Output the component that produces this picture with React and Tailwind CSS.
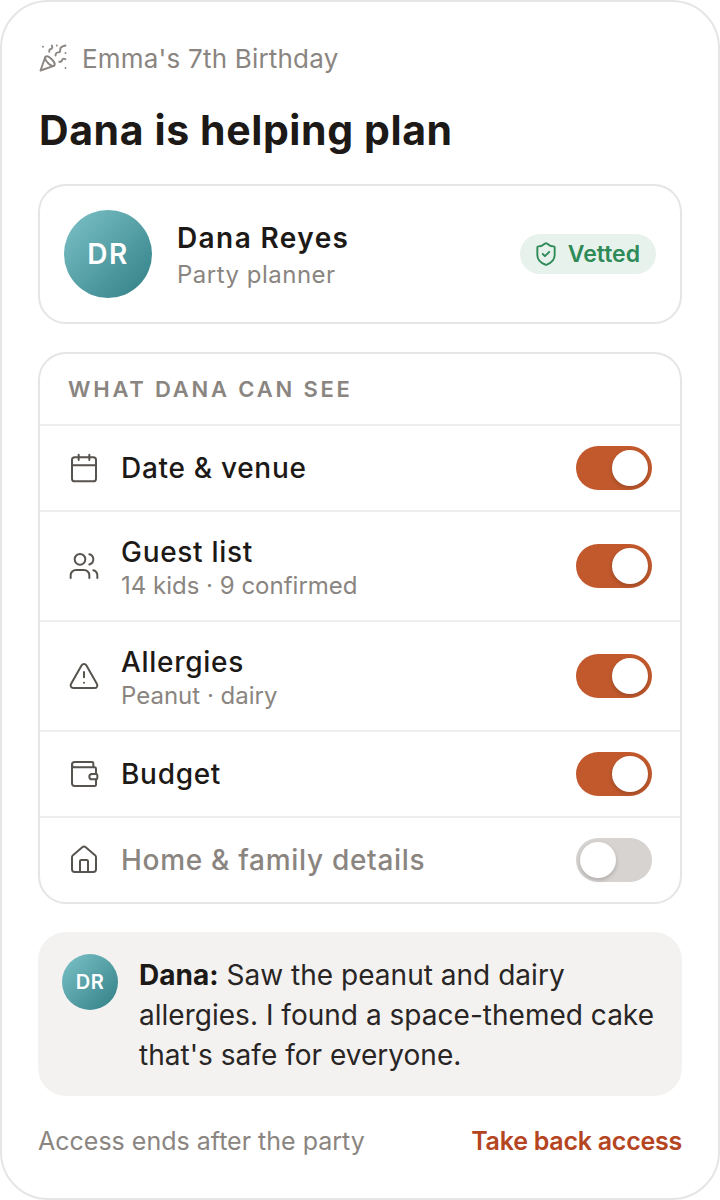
import React from 'react';
import { PartyPopper, Calendar, Users, TriangleAlert, Wallet, House, ShieldCheck } from 'lucide-react';

const Avatar = ({ big }) => (
  <div
    className={`flex shrink-0 items-center justify-center rounded-full bg-gradient-to-br from-[#7cc3c8] to-[#2f7f86] font-semibold text-white ${
      big ? 'h-[88px] w-[88px] text-[28px] tracking-[1.5px]' : 'h-14 w-14 text-[20px] tracking-[0.5px]'
    }`}
  >
    DR
  </div>
);

const Toggle = ({ on }) => (
  <div
    className={`flex h-11 w-[76px] shrink-0 items-center rounded-full p-1 ${
      on ? 'justify-end bg-[#c2592d]' : 'justify-start bg-[#d6d3d1]'
    }`}
  >
    <div className="h-9 w-9 rounded-full bg-white shadow-[0_2px_4px_rgba(0,0,0,0.2)]" />
  </div>
);

const rows = [
  { icon: Calendar, label: 'Date & venue', on: true, height: 'h-[86px]' },
  { icon: Users, label: 'Guest list', sub: '14 kids · 9 confirmed', on: true, height: 'h-[110px]' },
  { icon: TriangleAlert, label: 'Allergies', sub: 'Peanut · dairy', on: true, height: 'h-[110px]' },
  { icon: Wallet, label: 'Budget', on: true, height: 'h-[86px]' },
  { icon: House, label: 'Home & family details', on: false, height: 'h-[86px]' },
];

export default function App() {
  return (
    <div className="h-[1200px] w-[720px] bg-white font-['Inter',sans-serif] text-[#1c1917]">
      <div className="flex h-full flex-col rounded-[48px] border-2 border-[#e5e5e5] px-9 pt-[38px]">
        {/* Header */}
        <div className="flex h-9 items-center gap-[14px] text-[26px] tracking-[0.2px] text-[#8a8580]">
          <PartyPopper className="h-[30px] w-[30px]" strokeWidth={1.5} />
          <span>Emma's 7th Birthday</span>
        </div>
        <h1 className="mt-[28px] pl-px text-[41px] leading-[52px] font-bold tracking-[0.6px]">Dana is helping plan</h1>

        {/* Planner */}
        <div className="mt-[28px] flex h-[140px] items-center rounded-[28px] border-2 border-[#e5e5e5] px-6">
          <Avatar big />
          <div className="ml-[25px] flex-1 pt-[3px]">
            <div className="text-[28px] leading-9 font-semibold tracking-[1.4px]">Dana Reyes</div>
            <div className="mt-[3px] text-[24px] leading-8 tracking-[0.5px] text-[#8a8580]">Party planner</div>
          </div>
          <div className="flex h-10 items-center gap-[9px] rounded-full bg-[#e8f2ec] pr-4 pl-[13px] text-[23px] font-semibold text-[#2e8b57]">
            <ShieldCheck className="h-[26px] w-[26px]" strokeWidth={1.75} />
            <span>Vetted</span>
          </div>
        </div>

        {/* Permissions */}
        <div className="mt-[28px] rounded-[28px] border-2 border-[#e5e5e5]">
          <div className="flex h-[70px] items-center px-7 text-[22px] font-semibold tracking-[2.8px] text-[#8a8580] uppercase">
            What Dana can see
          </div>
          {rows.map(({ icon: Icon, label, sub, on, height }) => (
            <div key={label} className={`flex items-center border-t-2 border-[#eeeeee] pr-7 pl-7 ${height}`}>
              <Icon className="h-8 w-8 shrink-0 text-[#57534e]" strokeWidth={1.5} />
              <div className={`ml-[21px] flex-1 ${sub ? 'pt-[2px]' : ''}`}>
                <div className={`text-[28px] leading-9 font-[450] tracking-[0.7px] ${on ? '' : 'text-[#8a8580]'}`}>{label}</div>
                {sub && <div className="mt-px text-[24px] leading-[30px] text-[#8a8580]">{sub}</div>}
              </div>
              <Toggle on={on} />
            </div>
          ))}
        </div>

        {/* Message */}
        <div className="mt-[28px] flex h-[164px] rounded-[28px] bg-[#f3f2f0] py-[22px] pr-6 pl-6">
          <Avatar />
          <p className="mt-px ml-[21px] text-[28px] leading-10 tracking-[0.02px] text-[#292524]">
            <b className="font-bold text-[#1c1917]">Dana:</b> Saw the peanut and dairy allergies. I found a space-themed cake that's safe for everyone.
          </p>
        </div>

        {/* Footer */}
        <div className="mt-[29px] flex items-center justify-between text-[25px] leading-8">
          <span className="text-[#8a8580]">Access ends after the party</span>
          <span className="font-semibold tracking-[-0.25px] text-[#b5451f]">Take back access</span>
        </div>
      </div>
    </div>
  );
}
